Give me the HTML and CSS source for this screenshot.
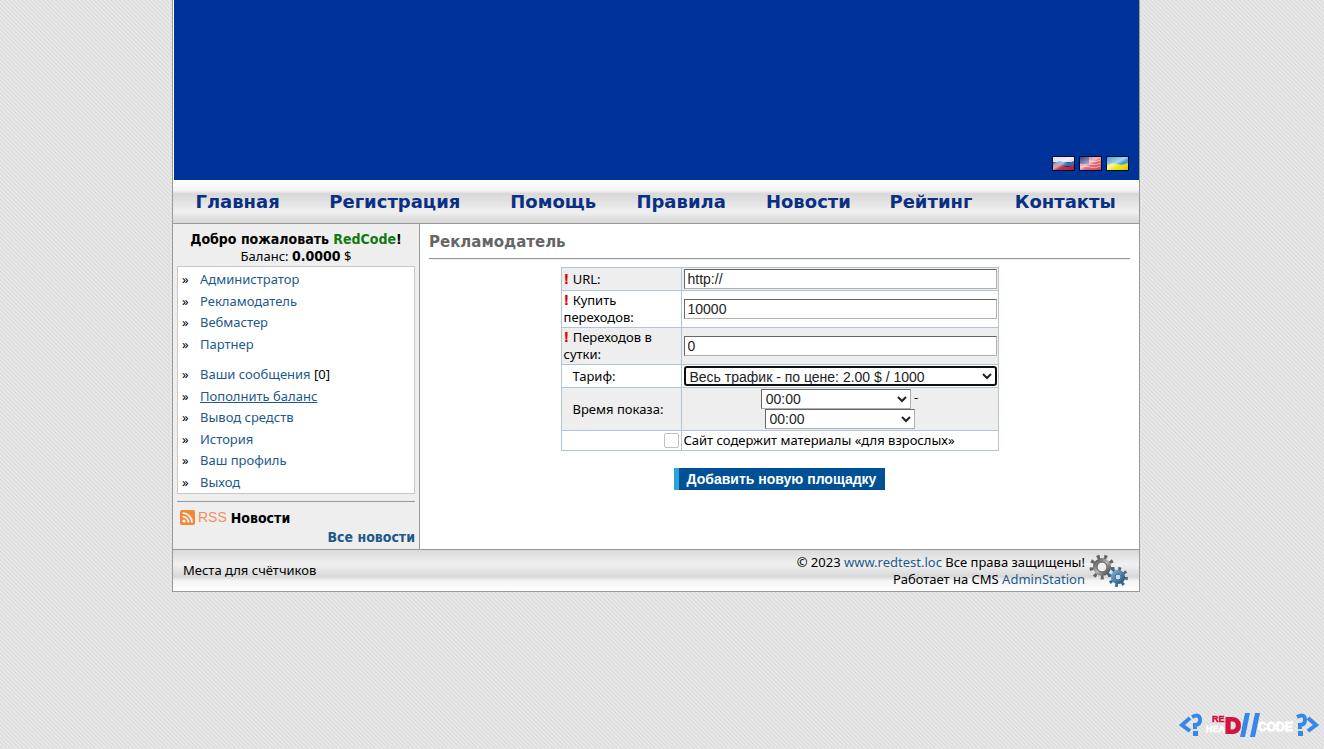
FILE: index.html
```html
<!DOCTYPE html>
<html lang="ru">
<head>
<meta charset="utf-8">
<title>Рекламодатель</title>
<link rel="stylesheet" href="styles.css">
</head>
<body>
<div class="page">
  <header class="banner">
    <a class="flag" href="#" aria-label="Русский"><svg width="23" height="15" viewBox="0 0 23 15"><defs><linearGradient id="gloss" x1="0" y1="0" x2="1" y2="1"><stop offset="0" stop-color="#fff" stop-opacity=".1"/><stop offset=".45" stop-color="#fff" stop-opacity=".6"/><stop offset=".6" stop-color="#fff" stop-opacity=".1"/><stop offset="1" stop-color="#000" stop-opacity=".15"/></linearGradient></defs><rect width="23" height="15" fill="#050a30"/><path fill="#d8dce6" d="M1 1h21v5H1z"/><path fill="#2464b4" d="M1 8q5-4 10-2t11-1v5H1z"/><path fill="#c81c34" d="M1 10q5-2 10 0t11-1v5H1z"/><path fill="url(#gloss)" d="M1 1h21v13H1z"/></svg></a>
    <a class="flag" href="#" aria-label="English"><svg width="23" height="15" viewBox="0 0 23 15"><rect width="23" height="15" fill="#050a30"/><path fill="#e05060" d="M1 1h21v13H1z"/><path fill="none" stroke="#f0b8bc" d="M1 5q5-2 10 0t11-1M1 8q5-2 10 0t11-1M1 11q5-2 10 0t11-1"/><path fill="#28287c" d="M1 1h9v7H1z"/><path fill="url(#gloss)" d="M1 1h21v13H1z"/></svg></a>
    <a class="flag" href="#" aria-label="Українська"><svg width="23" height="15" viewBox="0 0 23 15"><rect width="23" height="15" fill="#050a30"/><path fill="#2c98d4" d="M1 1h21v8H1z"/><path fill="#f2e400" d="M1 9q5-3 10-1t11-1v7H1z"/><path fill="url(#gloss)" d="M1 1h21v13H1z"/></svg></a>
  </header>
  <nav class="menu">
    <ul class="menu-list">
      <li><a href="#">Главная</a></li>
      <li><a href="#">Регистрация</a></li>
      <li><a href="#">Помощь</a></li>
      <li><a href="#">Правила</a></li>
      <li><a href="#">Новости</a></li>
      <li><a href="#">Рейтинг</a></li>
      <li><a href="#">Контакты</a></li>
    </ul>
  </nav>
  <div class="columns">
    <aside class="sidebar">
      <div class="welcome"><b>Добро пожаловать <span class="user">RedCode</span>!</b><br>Баланс: <b>0.0000</b> $</div>
      <div class="account">
        <ul class="links">
          <li><a href="#">Администратор</a></li>
          <li><a href="#">Рекламодатель</a></li>
          <li><a href="#">Вебмастер</a></li>
          <li><a href="#">Партнер</a></li>
        </ul>
        <ul class="links">
          <li><a href="#">Ваши сообщения</a> [0]</li>
          <li><a class="current" href="#">Пополнить баланс</a></li>
          <li><a href="#">Вывод средств</a></li>
          <li><a href="#">История</a></li>
          <li><a href="#">Ваш профиль</a></li>
          <li><a href="#">Выход</a></li>
        </ul>
      </div>
      <div class="news">
        <a class="rss" href="#"><svg width="15" height="15" viewBox="0 0 15 15"><rect width="15" height="15" rx="2" fill="#f08838"/><circle cx="4" cy="11" r="1.600" fill="#fff"/><path d="M2.500 6.500a6 6 0 0 1 6 6M2.500 3a9.500 9.500 0 0 1 9.500 9.500" fill="none" stroke="#fff" stroke-width="1.700"/></svg><span>RSS</span></a>
        <b>Новости</b>
      </div>
      <a class="all-news" href="#">Все новости</a>
    </aside>
    <main class="content">
      <h1 class="title">Рекламодатель</h1>
      <form>
        <table class="form-table">
          <colgroup><col class="col-label"><col></colgroup>
          <tr class="shade"><td><label for="url"><b class="req">!</b> URL:</label></td><td><input class="field" id="url" type="text" value="http://"></td></tr>
          <tr><td><label for="buy"><b class="req">!</b> Купить переходов:</label></td><td><input class="field" id="buy" type="text" value="10000"></td></tr>
          <tr class="shade"><td><label for="daily"><b class="req">!</b> Переходов в сутки:</label></td><td><input class="field" id="daily" type="text" value="0"></td></tr>
          <tr><td class="indent"><label for="plan">Тариф:</label></td><td><select class="plan" id="plan"><option>Весь трафик - по цене: 2.00 $ / 1000</option></select></td></tr>
          <tr class="shade"><td class="indent"><label for="from">Время показа:</label></td><td class="times"><select class="time" id="from"><option>00:00</option></select> -<br><select class="time" aria-label="Время показа до"><option>00:00</option></select></td></tr>
          <tr><td class="check-cell"><input class="check" id="adult" type="checkbox"></td><td><label for="adult">Сайт содержит материалы «для взрослых»</label></td></tr>
        </table>
        <button class="submit" type="submit">Добавить новую площадку</button>
      </form>
    </main>
  </div>
  <footer class="footer">
    <div class="counters">Места для счётчиков</div>
    <div class="copyright">© 2023 <a href="#">www.redtest.loc</a> Все права защищены!<br>Работает на CMS <a href="#">AdminStation</a></div>
    <svg class="gears" width="40" height="36" viewBox="0 0 40 36">
      <defs>
        <linearGradient id="steel" x1="0" y1="0" x2="1" y2="1"><stop offset="0" stop-color="#555"/><stop offset=".5" stop-color="#b4b4b4"/><stop offset="1" stop-color="#444"/></linearGradient>
        <linearGradient id="blue" x1="0" y1="0" x2="1" y2="1"><stop offset="0" stop-color="#7aa8cc"/><stop offset="1" stop-color="#28587e"/></linearGradient>
      </defs>
      <circle cx="13" cy="14" r="10.500" fill="none" stroke="#666" stroke-width="4" stroke-dasharray="3 4.330"/>
      <circle cx="13" cy="14" r="7" fill="none" stroke="url(#steel)" stroke-width="4"/>
      <circle cx="13" cy="14" r="5" fill="#eee" stroke="#555"/>
      <circle cx="29" cy="24" r="8" fill="none" stroke="#3a6b94" stroke-width="4" stroke-dasharray="2.700 3.583"/>
      <circle cx="29" cy="24" r="5.200" fill="none" stroke="url(#blue)" stroke-width="4"/>
      <circle cx="29" cy="24" r="3" fill="#c4dcec" stroke="#33658f"/>
    </svg>
  </footer>
</div>
<svg class="watermark" width="140" height="32" viewBox="0 0 140 32">
  <g fill="none" stroke="#3588ea" stroke-width="4"><path d="M11 9L3 16l8 6M129 9l8 7-8 6"/><path d="M13 8q8-4 8 3 0 5-5 5v4M118 8q8-4 8 3 0 5-5 5v4"/></g>
  <path fill="#3588ea" d="M14 22h5v5h-5zM119 22h5v5h-5zM66 4h5L66 28h-5zM76 4h5L76 28h-5z"/>
  <g class="mark">
    <text x="33" y="13" font-size="9" fill="#d4143c" stroke="#d4143c" stroke-width=".5">RE</text>
    <text x="27" y="23" font-size="9" fill="#fff" stroke="#fff" stroke-width=".5">HEA</text>
    <text x="46" y="24" font-size="22" fill="#d4143c" stroke="#d4143c" stroke-width="2">D</text>
    <text x="79" y="22" font-size="12" fill="#fff" stroke="#fff">CODE</text>
  </g>
</svg>
</body>
</html>
```
FILE: styles.css
```css
* { box-sizing: border-box; }

body {
  margin: 0;
  min-height: 100vh;
  padding-right: 12px;
  background: #e0e0e0 repeating-linear-gradient(45deg, #e8e8e8 0, #e8e8e8 1px, #d9d9d9 2px, #e8e8e8 3px);
  color: #000;
  font: 13px/17px "Noto Sans", "DejaVu Sans Condensed", sans-serif;
}

a { color: #1d5a8a; text-decoration: none; }
b, .all-news { font-family: "DejaVu Sans Condensed", "Noto Sans", sans-serif; font-size: 14px; }
b { line-height: 1; }
ul { margin: 0; padding: 0; list-style: none; }

.page {
  max-width: 968px;
  margin: 0 auto;
  background: #fff;
  border: 1px solid #999;
  border-top: 0;
}

.banner {
  display: flex;
  justify-content: flex-end;
  align-items: flex-end;
  gap: 4px;
  height: 180px;
  margin-left: 1px;
  padding: 0 10px 9px 0;
  background: #039;
}
.flag, .flag svg { display: block; }

.menu {
  height: 44px;
  padding-left: 3px;
  border-bottom: 1px solid #999;
  background: linear-gradient(#fff 0, #f4f4f4 25%, #d8d8d8 32%, #f0f0f0 75%, #e0e0e0 88%, #d8d8d8);
}
.menu-list { display: table; width: 100%; }
.menu-list li { display: table-cell; height: 43px; vertical-align: middle; text-align: center; }
.menu-list a { color: #0a2f85; font: bold 18px/22px "DejaVu Sans", sans-serif; }

.columns { display: flex; border-bottom: 1px solid #999; }
.sidebar {
  flex: none;
  width: 247px;
  padding: 7px 4px 3px;
  background: #eee;
  border-right: 1px solid #999;
}
.welcome { margin-bottom: 1px; text-align: center; }
.user { color: #107a10; }
.account { padding: 2px 4px 0; background: #fff; border: 1px solid #c8c8c8; }
.links + .links { margin-top: 9px; }
.links li { line-height: 21px; }
.links li:nth-child(even) { line-height: 22px; }
.links li::before { content: "»"; display: inline-block; width: 18px; }
.current { text-decoration: underline; }
.news {
  display: flex;
  align-items: center;
  gap: 4px;
  height: 28px;
  margin-top: 7px;
  padding: 4px 3px 0;
  border-top: 1px solid #999;
}
.rss { display: flex; align-items: center; gap: 3px; color: #f0905c; font: 14px/17px "Liberation Sans", sans-serif; }
.all-news { display: block; text-align: right; font-weight: bold; }

.content { flex: 1; padding: 9px 9px 16px; }
.title {
  margin: 0 0 8px;
  padding-bottom: 7px;
  border-bottom: 1px solid #999;
  box-shadow: 0 1px #eee;
  color: #666;
  font: bold 15px/18px "DejaVu Sans", sans-serif;
}

.form-table { width: 438px; max-width: 100%; margin: 0 auto; border-collapse: collapse; table-layout: fixed; }
.col-label { width: 120px; }
.form-table td { padding: 1px 1px 1px 2px; border: 1px solid #b5c4d4; }
.form-table .shade { background: #eee; }
.form-table .indent { padding-left: 11px; }
.req { color: #d00; }
.field, .plan, .time { display: block; width: 100%; height: 20px; background: #fff; color: #222; font: 14px "Liberation Sans", sans-serif; }
.field { padding: 0 3px; border: 1px solid #b0b0b0; border-top-color: #666; border-left-color: #666; }
.plan { padding: 0; border: 2px solid #101010; border-radius: 3px; }
.form-table .times { padding: 1px; text-align: center; }
.time { display: inline-block; width: 150px; vertical-align: top; border: 1px solid #b0b0b0; border-top-color: #666; border-left-color: #666; }
.form-table .check-cell { padding: 1px 2px; text-align: right; }
.check { appearance: none; display: block; width: 15px; height: 15px; margin: 0 0 0 auto; border: 1px solid #c0c0c0; border-radius: 2px; background: #fff; }
.submit {
  display: block;
  height: 22px;
  margin: 17px auto 0;
  padding: 0 9px 0 8px;
  border: 0;
  border-left: 5px solid #2aa4d6;
  background: #005096;
  color: #fff;
  font: bold 14px/20px "Liberation Sans", sans-serif;
}

.footer {
  display: flex;
  align-items: center;
  gap: 4px;
  height: 41px;
  padding: 0 10px;
  background: linear-gradient(#dadada, #f0f0f0 35%, #e4e4e4 50%, #d8d8d8 65%, #f4f4f4 75%, #fff);
}
.counters { flex: 1; }
.copyright { text-align: right; }
.gears { flex: none; }

.watermark { position: fixed; right: 5px; bottom: 8px; }
.mark { font-family: "Liberation Sans", sans-serif; font-weight: bold; }
```
